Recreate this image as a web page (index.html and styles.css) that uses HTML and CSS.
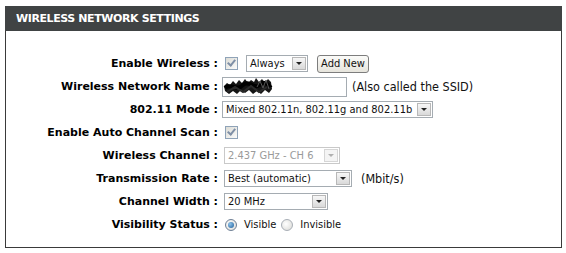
FILE: index.html
```html
<!DOCTYPE html>
<html lang="en">
<head>
  <meta charset="UTF-8" />
  <title>Wireless Network Settings</title>
  <link rel="stylesheet" href="styles.css">
</head>
<body>
  <div class="box">
    <h1>WIRELESS NETWORK SETTINGS</h1>

    <div class="form">
      <!-- enable -->
      <div class="row">
        <label>Enable Wireless :</label>
        <div class="field">
          <span class="check on"></span>
          <span class="dropdown w-always"><span class="value">Always</span><span class="arrow"></span></span>
          <button class="btn">Add New</button>
        </div>
      </div>

      <div class="row">
        <label>Wireless Network Name :</label>
        <div class="field">
          <span class="textbox">
            <input type="text" value="">
            <!-- ssid was blacked out in the screenshot -->
            <svg class="scribble" width="50" height="19" viewBox="0 0 50 19">
              <path d="M1 9 L4 6 L7 8 L10 4 L13 7 L16 3 L19 6 L22 2 L25 6 L28 3 L31 5 L33 1 L36 5 L39 2 L42 6 L45 2 L48 5 L49 12 L46 16 L42 13 L38 17 L34 14 L30 17 L26 13 L22 16 L18 13 L14 17 L10 14 L6 17 L2 14 Z" fill="#151515"/>
              <path d="M2 11 C8 5 14 15 20 8 C26 2 32 14 38 7 C42 3 46 10 48 8" stroke="#000" stroke-width="4" fill="none"/>
              <path d="M4 15 L12 10 L20 15 L28 9 L36 15 L44 10" stroke="#2a2a2a" stroke-width="2" fill="none"/>
              <path d="M34 10 L37 4 L40 11 L43 3 L46 12" stroke="#555" stroke-width="1" fill="none"/>
            </svg>
          </span>
          <span class="note">(Also called the SSID)</span>
        </div>
      </div>

      <div class="row">
        <label>802.11 Mode :</label>
        <div class="field">
          <span class="dropdown w-mode"><span class="value">Mixed 802.11n, 802.11g and 802.11b</span><span class="arrow"></span></span>
        </div>
      </div>

      <div class="row">
        <label>Enable Auto Channel Scan :</label>
        <div class="field">
          <span class="check on"></span>
        </div>
      </div>

      <div class="row">
        <label>Wireless Channel :</label>
        <div class="field">
          <span class="dropdown w-channel disabled"><span class="value">2.437 GHz - CH 6</span><span class="arrow"></span></span>
        </div>
      </div>

      <div class="row">
        <label>Transmission Rate :</label>
        <div class="field">
          <span class="dropdown w-rate"><span class="value">Best (automatic)</span><span class="arrow"></span></span>
          <span class="note unit">(Mbit/s)</span>
        </div>
      </div>

      <div class="row">
        <label>Channel Width :</label>
        <div class="field">
          <span class="dropdown w-width"><span class="value">20 MHz</span><span class="arrow"></span></span>
        </div>
      </div>

      <div class="row">
        <label>Visibility Status :</label>
        <div class="field">
          <span class="radio on"></span><span class="opt">Visible</span>
          <span class="radio"></span><span class="opt">Invisible</span>
        </div>
      </div>
    </div>
  </div>
</body>
</html>
```

FILE: styles.css
```css
body {
  margin: 0;
  background: white;
  font-family: "DejaVu Sans", Verdana, sans-serif;
}

.box {
  margin: 6px 0 0 5px;
  width: 555px;
  height: 241px;
  border: 1px solid #3a3a3a;
  border-top: none;
}

h1 {
  margin: 0 -1px;
  height: 25px;
  line-height: 26px;
  padding-left: 11px;
  background: #404344;
  color: white;
  font-size: 11px;
  font-weight: bold;
  letter-spacing: -0.4px;
}

.form {
  padding-top: 21px;
}

.row {
  display: flex;
  align-items: center;
  height: 23px;
}

label {
  width: 212px;
  text-align: right;
  font-size: 11px;
  font-weight: bold;
  color: #000;
  padding-right: 4px;
}

.field {
  display: flex;
  align-items: center;
  font-family: "DejaVu Sans Condensed", "DejaVu Sans", sans-serif;
  font-size: 11px;
}

/* checkbox */
.check {
  width: 11px;
  height: 11px;
  margin-left: 3px;
  border: 1px solid #8fa3b8;
  background: linear-gradient(135deg, #dcdcd6, #fbfbfb);
  position: relative;
}

.check.on::after {
  content: "";
  position: absolute;
  left: 3px;
  top: 0px;
  width: 3px;
  height: 6px;
  border: solid #7f8fa6;
  border-width: 0 2px 2px 0;
  transform: rotate(40deg);
}

/* fake select */
.dropdown {
  display: flex;
  align-items: center;
  height: 15px;
  border: 1px solid #a5acb2;
  background: white;
  color: #111;
}

.dropdown .value {
  flex: 1;
  padding-left: 3px;
  white-space: nowrap;
}

.dropdown .arrow {
  width: 14px;
  height: 13px;
  margin-right: 1px;
  border: 1px solid #b8b8b8;
  box-sizing: border-box;
  background: linear-gradient(#f7f7f7, #d9d9d9);
  position: relative;
}

.dropdown .arrow::after {
  content: "";
  position: absolute;
  left: 3px;
  top: 4px;
  border-left: 3px solid transparent;
  border-right: 3px solid transparent;
  border-top: 3px solid #222;
}

.dropdown.disabled {
  color: #9a9a9a;
  border-color: #c9c9c9;
}

.dropdown.disabled .arrow {
  background: #f4f4f4;
  border-color: #d6d6d6;
}

.dropdown.disabled .arrow::after {
  border-top-color: #b0b0b0;
}

.w-always {
  width: 60px;
  margin-left: 8px;
}

.w-mode {
  width: 209px;
}

.w-channel {
  width: 114px;
  margin-left: 2px;
}

.w-rate {
  width: 126px;
  margin-left: 2px;
}

.w-width {
  width: 102px;
  margin-left: 2px;
}

.btn {
  margin-left: 9px;
  height: 18px;
  width: 52px;
  padding: 0;
  border: 1px solid #7d7d7d;
  border-radius: 3px;
  background: linear-gradient(#fbfbf9, #e6e4dc);
  font-family: "DejaVu Sans Condensed", "DejaVu Sans", sans-serif;
  font-size: 11px;
  color: #111;
}

/* text input with hidden ssid */
.textbox {
  position: relative;
  display: flex;
}

.textbox input {
  width: 125px;
  height: 20px;
  box-sizing: border-box;
  border: 1px solid #a5acb2;
  margin: 0;
}

.scribble {
  position: absolute;
  left: 1px;
  top: 0;
}

.note {
  margin-left: 5px;
  font-size: 12.5px;
  color: #111;
}

.note.unit {
  margin-left: 9px;
}

/* radio buttons */
.radio {
  width: 10px;
  height: 10px;
  margin-left: 3px;
  border: 1px solid #a8aeb6;
  border-radius: 50%;
  background: radial-gradient(circle at 40% 40%, #ffffff, #d8d8d4);
  position: relative;
}

.radio.on {
  border-color: #6e7f95;
}

.radio.on::after {
  content: "";
  position: absolute;
  left: 2px;
  top: 2px;
  width: 6px;
  height: 6px;
  border-radius: 50%;
  background: radial-gradient(circle at 35% 35%, #8fc3ea, #1d5d9a);
}

.opt {
  margin-left: 7px;
  margin-right: 2px;
  font-size: 11px;
  color: #111;
}
```
